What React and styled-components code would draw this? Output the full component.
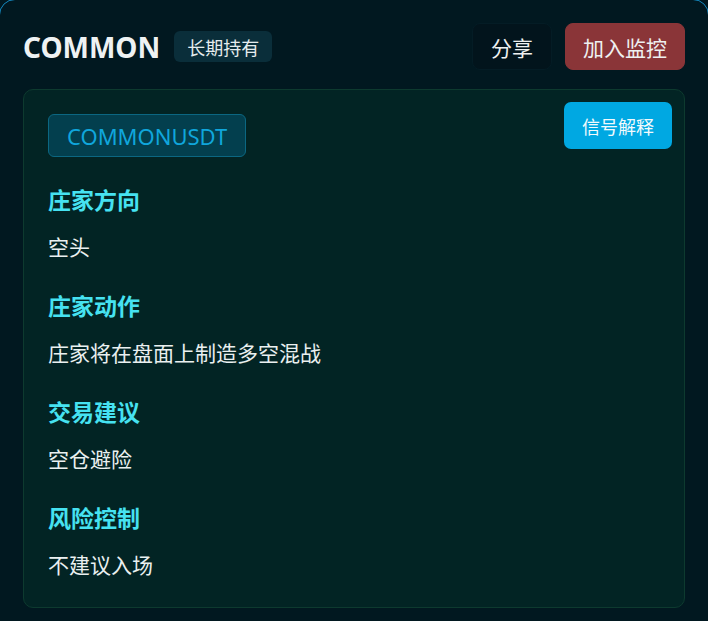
import styled, { createGlobalStyle } from "styled-components";

const GlobalStyle = createGlobalStyle`
  html, body {
    margin: 0;
    padding: 0;
    background: #011820;
    overflow: hidden;
  }
  body {
    font-family: "Noto Sans", "Noto Sans CJK SC", sans-serif;
  }
`;

const Card = styled.div`
  margin: -1px;
  border: 1px solid #1489c0;
  border-radius: 16px;
  background: #011820;
  padding: 23px 23px 30px 23px;
`;

const Header = styled.div`
  display: flex;
  align-items: center;
  justify-content: space-between;
  height: 47px;
`;

const TitleGroup = styled.div`
  display: flex;
  align-items: center;
  gap: 14px;
`;

const Title = styled.h1`
  margin: 0;
  font-size: 28px;
  font-weight: 700;
  color: #eef2f3;
`;

const Tag = styled.span`
  display: inline-flex;
  align-items: center;
  height: 31px;
  padding: 0 13px;
  border-radius: 6px;
  background: #0a2e3a;
  color: #e6ecee;
  font-family: "Noto Sans CJK SC", sans-serif;
  font-size: 18px;
`;

const Actions = styled.div`
  display: flex;
  gap: 13px;
`;

const Button = styled.button`
  height: 47px;
  padding: 0 ${(p) => (p.$primary ? "17px" : "18px")};
  border-radius: 8px;
  border: 1px solid ${(p) => (p.$primary ? "#8a3538" : "#041c25")};
  background: ${(p) => (p.$primary ? "#8a3538" : "#02141c")};
  color: #eef0f0;
  font-family: "Noto Sans CJK SC", sans-serif;
  font-size: 21px;
  cursor: pointer;
`;

const Panel = styled.div`
  margin-top: 19px;
  border: 1px solid #0d3a2f;
  border-radius: 10px;
  background: #022424;
  padding: 12px 12px 28px 24px;
`;

const PanelTop = styled.div`
  display: flex;
  justify-content: space-between;
  align-items: flex-start;
`;

const Symbol = styled.span`
  margin-top: 12px;
  display: inline-flex;
  align-items: center;
  height: 43px;
  box-sizing: border-box;
  padding: 0 18px;
  border: 1px solid #0b6782;
  border-radius: 6px;
  background: #033f4e;
  color: #10a6dc;
  font-size: 22px;
`;

const ExplainButton = styled.button`
  height: 47px;
  padding: 0 18px;
  border: none;
  border-radius: 7px;
  background: #00a8e2;
  color: #f2fafd;
  font-family: "Noto Sans CJK SC", sans-serif;
  font-size: 18px;
  cursor: pointer;
`;

const Sections = styled.div`
  margin-top: 27px;
  display: flex;
  flex-direction: column;
  gap: 29px;
`;

const Section = styled.div`
  display: flex;
  flex-direction: column;
  gap: 17px;
`;

const Heading = styled.h3`
  margin: 0;
  font-family: "Noto Sans CJK SC", sans-serif;
  font-size: 23px;
  line-height: 30px;
  font-weight: 700;
  color: #46e2f1;
`;

const Value = styled.p`
  margin: 0;
  font-family: "Noto Sans CJK SC", sans-serif;
  font-size: 21px;
  line-height: 30px;
  color: #eaf0f0;
`;

const items = [
  ["庄家方向", "空头"],
  ["庄家动作", "庄家将在盘面上制造多空混战"],
  ["交易建议", "空仓避险"],
  ["风险控制", "不建议入场"],
];

export default function App() {
  return (
    <>
      <GlobalStyle />
      <Card>
        <Header>
          <TitleGroup>
            <Title>COMMON</Title>
            <Tag>长期持有</Tag>
          </TitleGroup>
          <Actions>
            <Button>分享</Button>
            <Button $primary>加入监控</Button>
          </Actions>
        </Header>
        <Panel>
          <PanelTop>
            <Symbol>COMMONUSDT</Symbol>
            <ExplainButton>信号解释</ExplainButton>
          </PanelTop>
          <Sections>
            {items.map(([title, value]) => (
              <Section key={title}>
                <Heading>{title}</Heading>
                <Value>{value}</Value>
              </Section>
            ))}
          </Sections>
        </Panel>
      </Card>
    </>
  );
}
